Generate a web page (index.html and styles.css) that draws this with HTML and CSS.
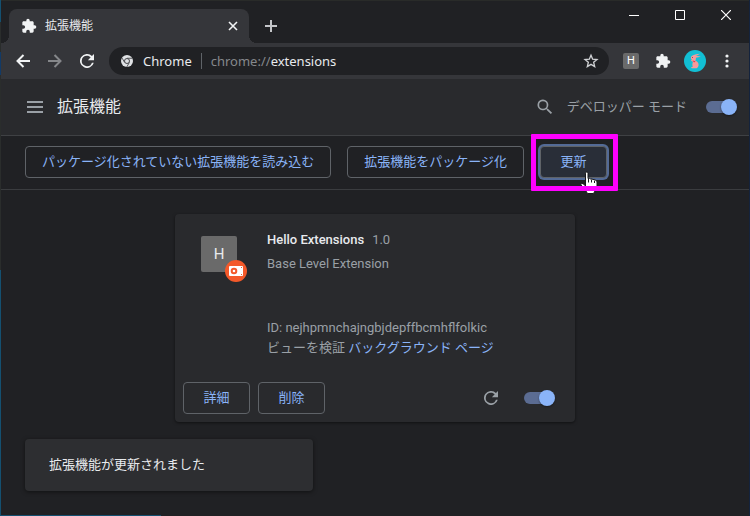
FILE: index.html
```html
<!DOCTYPE html>
<html lang="ja">
<head>
<meta charset="utf-8">
<title>拡張機能</title>
<link rel="stylesheet" href="styles.css">
</head>
<body>
<div class="window">
  <div class="tabstrip">
    <div class="tab">
      <svg class="icon-tab" viewBox="0 0 24 24"><path fill="#f1f3f4" d="M20.500 11H19V7c0-1.100-.9-2-2-2h-4V3.500a2.500 2.500 0 0 0-5 0V5H4c-1.100 0-2 .9-2 2v3.800h1.500a2.700 2.700 0 0 1 0 5.400H2V20c0 1.100.9 2 2 2h3.800v-1.500a2.700 2.700 0 0 1 5.400 0V22H17c1.100 0 2-.9 2-2v-4h1.500a2.500 2.500 0 0 0 0-5z"/></svg>
      <span class="tab-title">拡張機能</span>
      <button class="plain tab-close" aria-label="閉じる"><svg width="10" height="10" viewBox="0 0 10 10"><path d="M1 1l8 8M9 1l-8 8" stroke="#f1f3f4" stroke-width="1.600"/></svg></button>
    </div>
    <button class="plain new-tab" aria-label="新しいタブ"><svg width="12" height="12" viewBox="0 0 12 12"><path d="M6 0v12M0 6h12" stroke="#c4c6c9" stroke-width="2"/></svg></button>
    <div class="caption">
      <button class="plain" aria-label="最小化"><svg width="10" height="10" viewBox="0 0 10 10"><path d="M0 5.500h10" stroke="#fff"/></svg></button>
      <button class="plain" aria-label="最大化"><svg width="10" height="10" viewBox="0 0 10 10"><path d="M.5.5h9v9h-9z" fill="none" stroke="#fff"/></svg></button>
      <button class="plain" aria-label="ウィンドウを閉じる"><svg width="10" height="10" viewBox="0 0 10 10"><path d="M0 0l10 10M10 0L0 10" stroke="#fff" stroke-width="1.200"/></svg></button>
    </div>
  </div>

  <div class="toolbar">
    <div class="nav">
      <button class="plain" aria-label="戻る"><svg width="14" height="14" viewBox="0 0 14 14"><path d="M14 7H1.500M7.500 1l-6 6 6 6" fill="none" stroke="#f1f3f4" stroke-width="2"/></svg></button>
      <button class="plain" aria-label="進む"><svg width="14" height="14" viewBox="0 0 14 14"><path d="M0 7h12.500M6.500 1l6 6-6 6" fill="none" stroke="#85878a" stroke-width="2"/></svg></button>
      <button class="plain" aria-label="再読み込み"><svg width="14" height="14" viewBox="4 4 16 16"><path fill="#f1f3f4" d="M17.650 6.350A8 8 0 1 0 19.730 14h-2.080A6 6 0 1 1 12 6c1.660 0 3.140.69 4.220 1.780L13 11h7V4z"/></svg></button>
    </div>
    <div class="omnibox">
      <svg class="icon-chrome" viewBox="0 0 24 24"><circle cx="12" cy="12" r="12" fill="#dfe1e4"/><path d="M12 6.500h10.600M7.200 14.800L2 6M16.800 14.800L11.500 24" stroke="#35363a" stroke-width="1.600" fill="none"/><circle cx="12" cy="12" r="5" fill="#dfe1e4" stroke="#35363a" stroke-width="1.800"/></svg>
      <span class="chip">Chrome</span>
      <span class="divider"></span>
      <span class="url">chrome://<b>extensions</b></span>
      <button class="plain star" aria-label="ブックマーク"><svg width="16" height="16" viewBox="0 0 24 24"><path d="M12 3.200l2.500 6 6.500.6-5 4.200 1.500 6.400L12 17l-5.500 3.400L8 14 3 9.800l6.500-.6z" fill="none" stroke="#d0d2d5" stroke-width="2"/></svg></button>
    </div>
    <div class="actions">
      <span class="letter-small">H</span>
      <svg class="icon-puzzle" viewBox="0 0 24 24"><path fill="#f1f3f4" d="M20.500 11H19V7c0-1.100-.9-2-2-2h-4V3.500a2.500 2.500 0 0 0-5 0V5H4c-1.100 0-2 .9-2 2v3.800h1.500a2.700 2.700 0 0 1 0 5.400H2V20c0 1.100.9 2 2 2h3.800v-1.500a2.700 2.700 0 0 1 5.400 0V22H17c1.100 0 2-.9 2-2v-4h1.500a2.500 2.500 0 0 0 0-5z"/></svg>
      <svg class="avatar" viewBox="0 0 22 22"><circle cx="11" cy="11" r="11" fill="#12bfd4"/><path d="M7 7c1.500-1.800 3.500-2.600 9-3.200-1.800 1.200-3.500 1.800-4.700 2.300 2-.1 4-.1 5.500.6-1.700.6-3.600.6-5 1 .3 1.200 0 2.100-.6 2.800 2 .8 3.500 2.200 3.400 4.600-.1 1.600-1 2.700-2 3.200H8c-1-.3-1.200-1-.2-1.400l1-.2c-.7-1.700-.5-3.500.2-5L7.400 11c-.6-.7 0-1.200.7-1C7.300 9.300 6.700 8.500 7 7z" fill="#f69a9b"/><path d="M8.500 10.500l3.200.8-1.700 1.300z" fill="#e23b48"/><circle cx="8.500" cy="7.500" r=".5" fill="#65404b"/></svg>
      <button class="plain menu-dots" aria-label="メニュー"><svg width="4" height="14" viewBox="0 0 4 14"><g fill="#f1f3f4"><circle cx="2" cy="2" r="1.600"/><circle cx="2" cy="7" r="1.600"/><circle cx="2" cy="12" r="1.600"/></g></svg></button>
    </div>
  </div>

  <header class="page-header">
    <button class="plain" aria-label="メインメニュー"><svg width="16" height="12" viewBox="0 0 16 12"><path d="M0 1h16M0 6h16M0 11h16" stroke="#9aa0a6" stroke-width="2"/></svg></button>
    <h1>拡張機能</h1>
    <button class="plain search" aria-label="検索"><svg width="20" height="20" viewBox="0 0 24 24"><path fill="#9aa0a6" d="M15.500 14h-.79l-.28-.27A6.500 6.500 0 1 0 13.730 14.430l.27.28v.79l5 4.990L20.490 19zm-6 0a4.500 4.500 0 1 1 0-9 4.500 4.500 0 0 1 0 9z"/></svg></button>
    <label class="dev-label" for="dev-mode">デベロッパー モード</label>
    <input class="toggle" type="checkbox" id="dev-mode" checked>
  </header>

  <div class="dev-bar">
    <button class="btn">パッケージ化されていない拡張機能を読み込む</button>
    <button class="btn">拡張機能をパッケージ化</button>
    <div class="update">
      <button class="btn btn-short btn-focused">更新</button>
      <svg class="cursor" width="18" height="23" viewBox="0 0 18 23"><path d="M5.500 13V2.200Q5.500 1 6.700 1T8 2.200V7.500Q9.500 6.800 10.500 8 12 7.400 13 8.600 14.500 8 15.500 9.200q1.500.1 1.500 1.800v4.500l-2 4.500-1.500 2.500H7.500L5 18.500 1 14q-.7-1.500.8-1.700 1.500 0 3.700 2.700z" fill="#fff" stroke="#17181b"/><path d="M8.500 8v3.500M11.500 8.500v3M14.500 9.500v2.500" stroke="#17181b"/></svg>
    </div>
  </div>

  <main>
    <article class="card">
      <div class="card-body">
        <div class="ext-icon">H<svg class="badge" viewBox="0 0 22 22"><circle cx="11" cy="11" r="11" fill="#f4592a"/><rect x="4" y="6" width="14" height="10" rx="1" fill="#fff"/><circle cx="9" cy="11" r="2.300" fill="#fff" stroke="#f4592a" stroke-width="2"/><path d="M16 7h1v1h-1zM16 14h1v1h-1z" fill="#f4592a"/></svg></div>
        <div class="info">
          <div class="name-row"><h2>Hello Extensions</h2><span>1.0</span></div>
          <p class="desc">Base Level Extension</p>
          <p class="meta">ID: nejhpmnchajngbjdepffbcmhflfolkic</p>
          <p class="meta">ビューを検証 <a href="#">バックグラウンド ページ</a></p>
        </div>
      </div>
      <div class="card-actions">
        <button class="btn btn-short">詳細</button>
        <button class="btn btn-short">削除</button>
        <button class="plain reload" aria-label="更新"><svg width="14" height="14" viewBox="4 4 16 16"><path fill="#9aa0a6" d="M17.650 6.350A8 8 0 1 0 19.730 14h-2.080A6 6 0 1 1 12 6c1.660 0 3.140.69 4.220 1.780L13 11h7V4z"/></svg></button>
        <input class="toggle" type="checkbox" aria-label="有効" checked>
      </div>
    </article>
    <div class="toast" role="status">拡張機能が更新されました</div>
  </main>
</div>
</body>
</html>
```
FILE: styles.css
```css
* { box-sizing: border-box; }

body {
  margin: 0;
  background: #202124;
  color: #e8eaed;
  font: 13px/20px Roboto, "Noto Sans CJK JP", sans-serif;
}

h1, h2, p { margin: 0; }
svg { display: block; flex: none; }
a { color: #8ab4f8; text-decoration: none; }

/* The desktop shows as a thin coloured line along the window's edges */
.window {
  min-height: 100vh;
  display: flex;
  flex-direction: column;
  padding: 0 1px 1px;
  background:
    linear-gradient(#145070 22px, #2a2d2c 22px 52px, #123a66 52px 75px, #2a2d2c 75px 270px, #145070 270px) left / 1px 100% no-repeat,
    linear-gradient(#14233d, #14233d) right / 1px 100% no-repeat,
    linear-gradient(#145070, #145070) left bottom / 161px 1px no-repeat;
}

.plain {
  padding: 0;
  border: 0;
  background: none;
  display: flex;
  align-items: center;
  justify-content: center;
}

/* Tab strip */
.tabstrip {
  display: flex;
  height: 43px;
  padding: 8px 0 0 8px;
  border-top: 1px solid #292b29;
}

.tab {
  position: relative;
  display: flex;
  align-items: center;
  width: 240px;
  padding: 0 11px 0 12px;
  background: #35363a;
  border-radius: 8px 8px 0 0;
  font-size: 12px;
}

.tab::before,
.tab::after {
  content: "";
  position: absolute;
  bottom: 0;
  width: 8px;
  height: 8px;
}

.tab::before {
  right: 100%;
  background: radial-gradient(circle at 0 0, transparent 8px, #35363a 8px);
}

.tab::after {
  left: 100%;
  background: radial-gradient(circle at 100% 0, transparent 8px, #35363a 8px);
}

.icon-tab { width: 16px; height: 16px; }
.tab-title { margin-left: 8px; }
.tab-close { margin-left: auto; }
.new-tab { margin-left: 16px; }

.caption {
  display: flex;
  margin: -8px 0 0 auto;
  height: 28px;
}

.caption .plain { width: 46px; }

/* Toolbar */
.toolbar {
  display: flex;
  align-items: center;
  height: 36px;
  padding: 0 20px 0 15px;
  background: #35363a;
}

.nav { display: flex; gap: 18px; }

.omnibox {
  display: flex;
  flex: 1;
  align-items: center;
  height: 28px;
  margin-left: 15px;
  padding: 0 10px 0 12px;
  border-radius: 14px;
  background: #202124;
  font: 13px/20px "Noto Sans", "Noto Sans CJK JP", sans-serif;
}

.icon-chrome { width: 12px; height: 12px; }
.chip { margin-left: 10px; }
.divider { width: 1px; height: 16px; margin: 0 9px; background: #5f6368; }
.url { color: #85888c; }
.url b { color: #e8eaed; font-weight: 400; }
.star { margin-left: auto; }

.actions { display: flex; align-items: center; margin-left: 14px; }

.letter-small {
  width: 16px;
  height: 16px;
  border-radius: 2px;
  background: #6a6a6a;
  color: #fff;
  font-size: 11px;
  line-height: 16px;
  text-align: center;
}

.icon-puzzle { width: 16px; height: 16px; margin-left: 16px; }
.avatar { width: 22px; height: 22px; margin-left: 13px; }
.menu-dots { margin-left: 19px; }

/* Page header */
.page-header {
  display: flex;
  align-items: center;
  height: 57px;
  padding: 0 12px 0 26px;
  background: #292a2d;
  border-bottom: 1px solid #3f4144;
}

h1 {
  margin-left: 14px;
  font-size: 16px;
  font-weight: 400;
}

.search { margin-left: auto; }
.dev-label { margin: 0 19px 0 12px; color: #9aa0a6; }

.toggle {
  appearance: none;
  position: relative;
  flex: none;
  width: 28px;
  height: 12px;
  margin: 0 3px 0 0;
  border-radius: 6px;
  background: #5b6c92;
}

.toggle::after {
  content: "";
  position: absolute;
  top: -2px;
  right: -3px;
  width: 16px;
  height: 16px;
  border-radius: 50%;
  background: #8ab4f8;
  box-shadow: 0 1px 2px rgba(0, 0, 0, .4);
}

/* Buttons */
.btn {
  height: 32px;
  padding: 0 16px;
  border: 1px solid #5f6368;
  border-radius: 4px;
  background: none;
  color: #8ab4f8;
  font: inherit;
  white-space: nowrap;
}

.btn-short { min-width: 67px; }

.btn-focused {
  display: block;
  background: #292e38;
  box-shadow: 0 0 0 2px #536a96;
}

.dev-bar {
  display: flex;
  align-items: flex-start;
  gap: 16px;
  height: 54px;
  padding: 10px 24px;
  border-bottom: 1px solid #3a3c3f;
}

.update { position: relative; }

/* Highlight frame drawn over the button and the pointer */
.update::after {
  content: "";
  position: absolute;
  inset: -12px -11px -13px -9px;
  border: 5px solid #f0f;
  border-radius: 1px;
}

.cursor {
  position: absolute;
  left: 40px;
  top: 25px;
}

/* Extension card */
main { padding: 24px 24px 0; }

.card {
  display: flex;
  flex-direction: column;
  max-width: 400px;
  min-height: 208px;
  margin: 0 auto;
  border-radius: 4px;
  background: #292a2d;
  box-shadow: 0 1px 3px rgba(0, 0, 0, .5);
}

.card-body { display: flex; gap: 30px; padding: 16px 24px 0 26px; }

.ext-icon {
  position: relative;
  flex: none;
  width: 36px;
  height: 36px;
  margin-top: 6px;
  border-radius: 2px;
  background: #6a6a6a;
  font-size: 15px;
  line-height: 36px;
  text-align: center;
}

.badge {
  position: absolute;
  left: 24px;
  top: 24px;
  width: 22px;
  height: 22px;
}

.name-row { display: flex; gap: 8px; color: #9aa0a6; }
h2 { color: #e8eaed; font-size: 13px; line-height: 20px; font-weight: 500; }
.desc { margin: 4px 0 44px; color: #9aa0a6; }
.meta { color: #9aa0a6; }

.card-actions {
  display: flex;
  align-items: center;
  gap: 8px;
  margin-top: auto;
  padding: 8px 20px 8px 8px;
}

.reload { margin: 0 18px 0 auto; }

.toast {
  width: 288px;
  max-width: 100%;
  margin-top: 17px;
  padding: 16px 24px;
  border-radius: 4px;
  background: #2d2e31;
  box-shadow: 0 1px 4px rgba(0, 0, 0, .5);
}
```
